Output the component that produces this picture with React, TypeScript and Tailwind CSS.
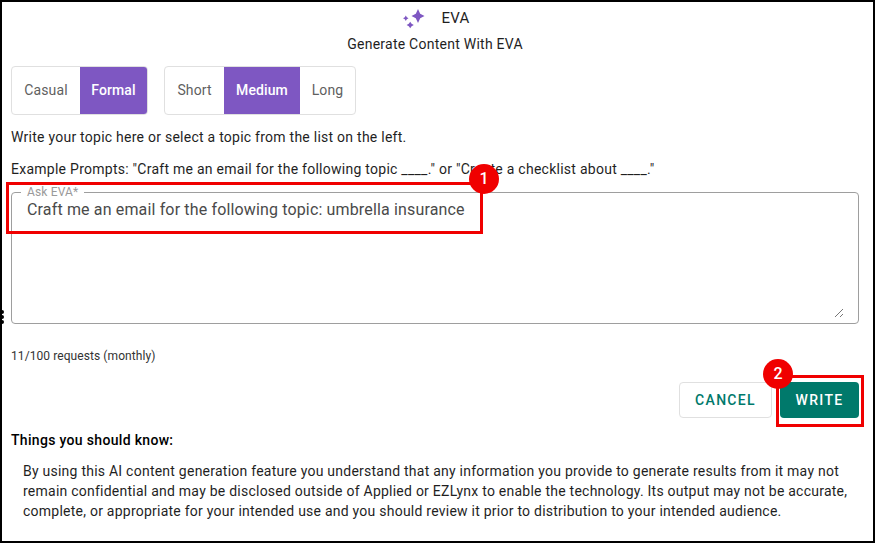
function Toggle({ label, active, className }: { label: string; active?: boolean; className: string }) {
  return (
    <div
      className={
        active
          ? `flex items-center justify-center bg-[#7e57c2] font-medium text-white ${className}`
          : `flex items-center justify-center text-[#5f5f5f] ${className}`
      }
    >
      {label}
    </div>
  )
}

export default function App() {
  return (
    <div className="relative h-[543px] w-[875px] overflow-hidden border-2 border-black bg-white font-['Roboto',sans-serif] text-[#1f1f1f]">
      {/* Header */}
      <div className="flex h-[30px] items-center justify-center pt-[2px] pr-[4px]">
        <svg width="24" height="22" viewBox="0 0 24 22" className="mr-[16px]" fill="#7e57c2">
          <path d="M16 2 L18.2 6.8 L22.5 9 L18.2 11.2 L16 16 L13.8 11.2 L9.5 9 L13.8 6.8 Z" />
          <path d="M3.8 8.5 L4.8 10.2 L6.5 11.2 L4.8 12.2 L3.8 14 L2.8 12.2 L1 11.2 L2.8 10.2 Z" />
          <path d="M8.2 14.8 L9.6 16.8 L11.8 18 L9.6 19.2 L8.2 21.2 L6.8 19.2 L4.6 18 L6.8 16.8 Z" />
        </svg>
        <span className="text-[15px] tracking-[0.2px]">EVA</span>
      </div>
      <div className="mt-[3px] pr-[5px] text-center text-[14px] leading-[18px] tracking-[0.25px]">Generate Content With EVA</div>

      {/* Toggles */}
      <div className="mt-[13px] ml-[9px] flex gap-[16px] text-[14px] tracking-[0.1px]">
        <div className="flex h-[49px] w-[137px] overflow-hidden rounded-[4px] border border-[#e0e0e0]">
          <Toggle label="Casual" className="w-[68px]" />
          <Toggle label="Formal" active className="flex-1" />
        </div>
        <div className="flex h-[49px] w-[192px] overflow-hidden rounded-[4px] border border-[#e0e0e0]">
          <Toggle label="Short" className="w-[59px]" />
          <Toggle label="Medium" active className="w-[76px]" />
          <Toggle label="Long" className="flex-1" />
        </div>
      </div>

      {/* Copy */}
      <p className="mt-[12px] ml-[9px] text-[14px] leading-[20px] tracking-[0.25px]">Write your topic here or select a topic from the list on the left.</p>
      <p className="mt-[12px] ml-[9px] text-[14px] leading-[20px] tracking-[0.26px]">
        Example Prompts: "Craft me an email for the following topic ____." or "Create a checklist about ____."
      </p>

      {/* Ask EVA field */}
      <div className="relative mt-[13px] ml-[9px] h-[132px] w-[848px] rounded-[4px] border border-[#9e9e9e] px-[15px] pt-[7px] text-[16px] leading-[20px] tracking-[0.15px] text-[#4a4a4a]">
        <span className="absolute top-[-7px] left-[9px] bg-white px-[6px] text-[12px] leading-[12px] text-[#9a9a9a]">Ask EVA*</span>
        Craft me an email for the following topic: umbrella insurance
        <svg width="10" height="10" viewBox="0 0 10 10" className="absolute right-[14px] bottom-[5px]" stroke="#777" fill="none">
          <path d="M1 9 L9 1 M6 9 L9 6" />
        </svg>
      </div>

      <div className="mt-[24px] ml-[9px] text-[12px] leading-[16px] tracking-[0.08px] text-[#333]">11/100 requests (monthly)</div>

      {/* Actions */}
      <div className="mt-[18px] mr-[14px] flex justify-end gap-[8px] text-[14px] font-medium tracking-[1.3px]">
        <div className="flex h-[36px] w-[93px] items-center justify-center rounded-[4px] border border-[#e0e0e0] text-[#00796b]">CANCEL</div>
        <div className="flex h-[36px] w-[79px] items-center justify-center rounded-[4px] bg-[#00796b] text-white">WRITE</div>
      </div>

      {/* Notes */}
      <div className="mt-[12px] ml-[9px] text-[14px] leading-[20px] font-medium tracking-[0.32px] text-black">Things you should know:</div>
      <p className="mt-[11px] mr-[20px] ml-[21px] text-[14px] leading-[20px] tracking-[0.24px]">
        By using this AI content generation feature you understand that any information you provide to generate results from it may not remain confidential and may be disclosed outside of Applied or EZLynx to enable the technology. Its output may not be accurate, complete, or appropriate for your intended use and you should review it prior to distribution to your intended audience.
      </p>

      {/* Annotations */}
      <div className="absolute top-[180px] left-[4px] h-[52px] w-[477px] border-[3px] border-[#f00000]" />
      <div className="absolute top-[162px] left-[467px] flex h-[30px] w-[30px] items-center justify-center rounded-full bg-[#f00000] text-[16px] font-medium text-white">1</div>
      <div className="absolute top-[373px] left-[774px] h-[52px] w-[88px] border-[3px] border-[#f00000]" />
      <div className="absolute top-[357px] left-[761px] flex h-[30px] w-[30px] items-center justify-center rounded-full bg-[#f00000] text-[16px] font-medium text-white">2</div>

      {/* Drag handle */}
      <div className="absolute top-[308px] left-[-2px] flex flex-col gap-[1px]">
        <div className="h-[4px] w-[4px] rounded-full bg-black" />
        <div className="h-[4px] w-[4px] rounded-full bg-black" />
        <div className="h-[4px] w-[4px] rounded-full bg-black" />
      </div>
    </div>
  )
}
